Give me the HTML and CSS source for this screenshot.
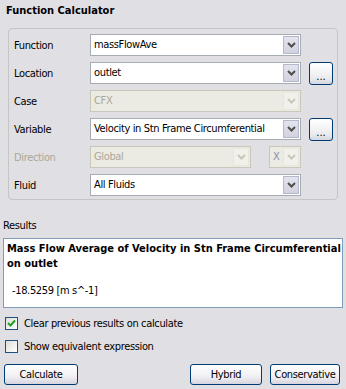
FILE: index.html
```html
<!DOCTYPE html>
<html>
<head>
<meta charset="utf-8">
<link rel="stylesheet" href="styles.css">
</head>
<body>
<div class="panel">
  <div class="title">Function Calculator</div>
  <div class="group">
    <div class="row">
      <span class="label">Function</span>
      <div class="combo wide"><span class="val">massFlowAve</span><span class="arrow"><svg width="9" height="6" viewBox="0 0 9 6"><path d="M1 1 L4.5 4.5 L8 1" fill="none" stroke="#4d4d4d" stroke-width="2"/></svg></span></div>
    </div>
    <div class="row">
      <span class="label">Location</span>
      <div class="combo wide"><span class="val">outlet</span><span class="arrow"><svg width="9" height="6" viewBox="0 0 9 6"><path d="M1 1 L4.5 4.5 L8 1" fill="none" stroke="#4d4d4d" stroke-width="2"/></svg></span></div>
      <button class="dots">...</button>
    </div>
    <div class="row">
      <span class="label">Case</span>
      <div class="combo wide disabled"><span class="val">CFX</span><span class="arrow"><svg width="9" height="6" viewBox="0 0 9 6"><path d="M1 1 L4.5 4.5 L8 1" fill="none" stroke="#c9c7ba" stroke-width="2"/></svg></span></div>
    </div>
    <div class="row">
      <span class="label">Variable</span>
      <div class="combo wide"><span class="val">Velocity in Stn Frame Circumferential</span><span class="arrow"><svg width="9" height="6" viewBox="0 0 9 6"><path d="M1 1 L4.5 4.5 L8 1" fill="none" stroke="#4d4d4d" stroke-width="2"/></svg></span></div>
      <button class="dots">...</button>
    </div>
    <div class="row">
      <span class="label dim">Direction</span>
      <div class="combo mid disabled"><span class="val">Global</span><span class="arrow"><svg width="9" height="6" viewBox="0 0 9 6"><path d="M1 1 L4.5 4.5 L8 1" fill="none" stroke="#c9c7ba" stroke-width="2"/></svg></span></div>
      <div class="combo small disabled"><span class="val x">X</span><span class="arrow"><svg width="9" height="6" viewBox="0 0 9 6"><path d="M1 1 L4.5 4.5 L8 1" fill="none" stroke="#c9c7ba" stroke-width="2"/></svg></span></div>
    </div>
    <div class="row">
      <span class="label">Fluid</span>
      <div class="combo wide"><span class="val">All Fluids</span><span class="arrow"><svg width="9" height="6" viewBox="0 0 9 6"><path d="M1 1 L4.5 4.5 L8 1" fill="none" stroke="#4d4d4d" stroke-width="2"/></svg></span></div>
    </div>
  </div>
  <div class="results-label">Results</div>
  <div class="results">
    <div class="res-title">Mass Flow Average of Velocity in Stn Frame Circumferential on outlet</div>
    <div class="res-value">-18.5259 [m s^-1]</div>
  </div>
  <div class="check-row">
    <span class="box"><svg width="9" height="9" viewBox="0 0 9 9"><path d="M1 4 L3.5 6.5 L8 1.5" fill="none" stroke="#21a121" stroke-width="2"/></svg></span>
    <span>Clear previous results on calculate</span>
  </div>
  <div class="check-row">
    <span class="box"></span>
    <span>Show equivalent expression</span>
  </div>
  <div class="buttons">
    <button class="btn calc">Calculate</button>
    <div class="spacer"></div>
    <button class="btn hybrid">Hybrid</button>
    <button class="btn cons">Conservative</button>
  </div>
</div>
</body>
</html>
```
FILE: styles.css
```css
html, body {
  margin: 0;
  padding: 0;
  background: #e0dfe3;
}
body {
  font-family: "DejaVu Sans Condensed", "DejaVu Sans", sans-serif;
  font-size: 11px;
  letter-spacing: -0.35px;
  color: #000;
}
.panel {
  width: 346px;
  height: 389px;
  display: flex;
  flex-direction: column;
}
.title {
  font-weight: bold;
  letter-spacing: 0;
  height: 13px;
  line-height: 13px;
  margin: 4px 0 0 6px;
}
.group {
  margin: 11px 0 0 8px;
  width: 323px;
  height: 165px;
  border: 1px solid #c5c5c5;
  border-radius: 4px;
  padding: 5px 0 0 5px;
  display: flex;
  flex-direction: column;
  gap: 6px;
}
.row {
  display: flex;
  align-items: center;
  height: 22px;
}
.label {
  width: 76px;
}
.label.dim, .disabled .val {
  color: #aca899;
}
.combo {
  box-sizing: border-box;
  height: 22px;
  border: 1px solid #a5acb2;
  background: #fff;
  display: flex;
  align-items: stretch;
}
.combo.wide { width: 211px; }
.combo.mid { width: 161px; }
.combo.small { width: 32px; margin-left: 18px; }
.combo.disabled { background: #ebebe4; border-color: #c9c7ba; }
.val {
  flex: 1;
  padding-left: 3px;
  line-height: 20px;
  white-space: nowrap;
  overflow: hidden;
}
.val.x { color: #8c8ca8; }
.arrow {
  box-sizing: border-box;
  width: 16px;
  margin: 1px;
  border: 1px solid #b4b8cc;
  background: linear-gradient(#e4e4ee, #d2d2de);
  display: flex;
  align-items: center;
  justify-content: center;
}
.disabled .arrow {
  background: #f1f0ea;
  border-color: #e8e6dc;
}
.dots {
  box-sizing: border-box;
  margin-left: 8px;
  width: 24px;
  height: 23px;
  border: 1px solid #003c74;
  border-radius: 3px;
  background: linear-gradient(#ffffff, #ececf0 70%, #d6d5dc);
  font-family: inherit;
  font-size: 11px;
  letter-spacing: 0;
  padding: 0 0 2px 0;
  line-height: 1;
  display: flex;
  align-items: flex-end;
  justify-content: center;
}
.results-label {
  margin: 19px 0 0 3px;
  line-height: 13px;
}
.results {
  box-sizing: border-box;
  margin: 6px 0 0 3px;
  width: 340px;
  height: 70px;
  border: 1px solid #7f9db9;
  background: #fff;
  padding: 2px 0 0 3px;
}
.res-title {
  font-weight: bold;
  letter-spacing: 0;
  line-height: 15px;
}
.res-value {
  margin: 13px 0 0 5px;
  line-height: 13px;
}
.check-row {
  display: flex;
  align-items: center;
  gap: 6px;
  height: 13px;
  margin: 9px 0 0 5px;
}
.check-row + .check-row { margin-top: 10px; }
.box {
  box-sizing: border-box;
  width: 13px;
  height: 13px;
  border: 1px solid #1c5180;
  background: linear-gradient(135deg, #dcdcd7, #fff);
  display: flex;
  align-items: center;
  justify-content: center;
}
.buttons {
  display: flex;
  margin: 11px 0 0 4px;
  width: 336px;
}
.spacer { flex: 1; }
.btn {
  box-sizing: border-box;
  height: 21px;
  border: 1px solid #003c74;
  border-radius: 3px;
  background: linear-gradient(#ffffff, #f0f0f4 60%, #d6d5df);
  font-family: inherit;
  font-size: 11px;
  letter-spacing: -0.35px;
  color: #000;
  padding: 0;
}
.calc { width: 74px; }
.hybrid { width: 72px; margin-right: 8px; }
.cons { width: 70px; }
```
